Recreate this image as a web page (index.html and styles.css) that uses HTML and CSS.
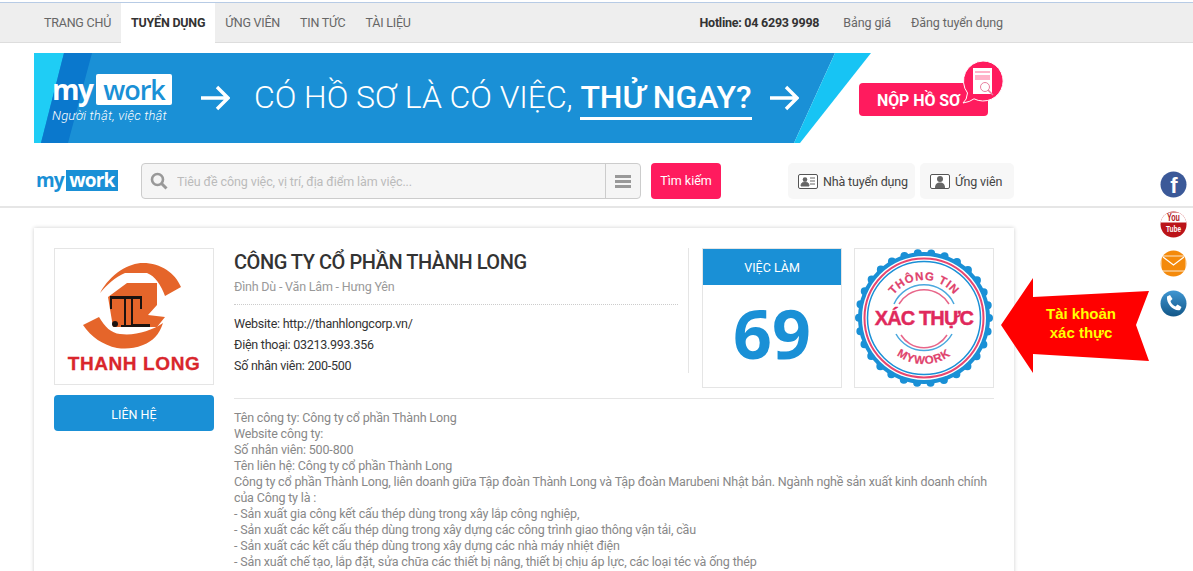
FILE: index.html
```html
<!doctype html>
<html>
<head>
	<meta charset="utf-8">
	<title>Công ty cổ phần Thành Long</title>
	<link rel="stylesheet" href="styles.css">
</head>
<body>
	<!-- menu tren cung -->
	<div class="topbar">
		<div class="wrap topbar-in">
			<ul class="menu">
				<li><a href="#">TRANG CHỦ</a></li>
				<li class="current"><a href="#">TUYỂN DỤNG</a></li>
				<li><a href="#">ỨNG VIÊN</a></li>
				<li><a href="#">TIN TỨC</a></li>
				<li><a href="#">TÀI LIỆU</a></li>
			</ul>
			<div class="top-links">
				<b>Hotline: 04 6293 9998</b>
				<a href="#">Bảng giá</a>
				<a href="#">Đăng tuyển dụng</a>
			</div>
		</div>
	</div>

	<!-- banner -->
	<div class="wrap promo">
		<div class="banner">
			<svg class="banner-bg" width="837" height="90" viewBox="0 0 837 90">
				<polygon points="0,0 801,0 760,90 0,90" fill="#1a90d6"/>
				<polygon points="0,0 30,0 7,90 0,90" fill="#1fcdf5"/>
				<polygon points="30,0 58,0 34,90 7,90" fill="#0a78cd"/>
				<polygon points="801,0 837,0 766,90 760,90" fill="#17c4f4"/>
			</svg>
			<div class="brand">
				<div class="brand-logo"><span>my</span><em>work</em></div>
				<i>Người thật, việc thật</i>
			</div>
			<svg class="arrow" width="30" height="26" viewBox="0 0 30 26"><path d="M1 13H28M17 2L28 13L17 24" fill="none" stroke="#fff" stroke-width="3.4"/></svg>
			<div class="slogan">CÓ HỒ SƠ LÀ CÓ VIỆC, <b>THỬ NGAY?</b></div>
			<svg class="arrow" width="30" height="26" viewBox="0 0 30 26"><path d="M1 13H28M17 2L28 13L17 24" fill="none" stroke="#fff" stroke-width="3.4"/></svg>
		</div>
		<a class="cta" href="#">NỘP HỒ SƠ
			<svg class="cta-bubble" width="46" height="50" viewBox="0 0 46 50">
				<path d="M23 2a20 20 0 1 1-9 37.800q-4 3.200-11 4.200q4-3 4.500-10A20 20 0 0 1 23 2z" fill="#ff1b5e" stroke="#fff" stroke-width="1"/>
				<path d="M13 9h19v26h-19z" fill="#fff"/>
				<path d="M15 12h15v2h-15zM15 16h15v5h-15z" fill="#ffb3c9"/>
				<circle cx="25" cy="28" r="4.500" fill="#fff" stroke="#e9809f"/>
				<path d="M28 31l5 5" stroke="#e9809f" stroke-width="1.500"/>
			</svg>
		</a>
	</div>

	<!-- tim kiem -->
	<div class="searchbar">
		<div class="wrap searchbar-in">
			<div class="small-logo"><span>my</span><em>work</em></div>
			<div class="search">
				<svg width="18" height="18" viewBox="0 0 18 18"><circle cx="7.500" cy="7.500" r="5.500" fill="none" stroke="#999" stroke-width="2.600"/><path d="M11.500 11.500L16.500 16.500" stroke="#999" stroke-width="3"/></svg>
				<input type="text" placeholder="Tiêu đề công việc, vị trí, địa điểm làm việc...">
				<span class="search-menu"><i></i><i></i><i></i></span>
			</div>
			<a class="btn-search" href="#">Tìm kiếm</a>
			<div class="user-btns">
				<a class="btn-employer" href="#">
					<svg width="20" height="15" viewBox="0 0 20 15"><rect x=".5" y=".5" width="19" height="14" rx="1.500" fill="#fff" stroke="#555"/><circle cx="7" cy="5.500" r="2.300" fill="#666"/><path d="M3 12c0-3 2-4 4-4s4 1 4 4zM12 4h5M12 7h5M12 10h5" fill="#666" stroke="#666"/></svg>
					Nhà tuyển dụng
				</a>
				<a class="btn-seeker" href="#">
					<svg width="20" height="15" viewBox="0 0 20 15"><rect x=".5" y=".5" width="19" height="14" rx="1.500" fill="#fff" stroke="#555"/><circle cx="10" cy="5" r="3" fill="#666"/><path d="M5 14c0-4 2-5.500 5-5.500s5 1.500 5 5.500z" fill="#666"/></svg>
					Ứng viên
				</a>
			</div>
		</div>
	</div>

	<!-- thong tin cong ty -->
	<div class="wrap card">
		<div class="card-left">
			<div class="company-logo">
				<svg width="158" height="135" viewBox="0 0 158 135">
					<path d="M45 44C56 24 74 14 88 14C106 14 120 24 126 38L110 47C106 36 100 27 92 24H70C60 28 52 36 45 44z" fill="#e5652a"/>
					<path d="M28 76L44 68C50 78 56 84 65 85C80 87 96 82 108 74C104 86 98 92 88 96C78 100 70 100 62 99C48 96 36 88 28 76z" fill="#e5652a"/>
					<path d="M53 48L72 34H102V56L93 66L110 68L102 78H58z" fill="#e5652a"/>
					<path d="M55 47H87V60H85V50H78V75H95V78H66V76H69V50H57V60H55z" fill="#1c1310"/>
					<path d="M71 50h5v26h-5z" fill="#e5652a"/>
					<circle cx="60" cy="75" r="3" fill="#1c1310"/>
					<text class="logo-name" x="79" y="121" text-anchor="middle">THANH LONG</text>
				</svg>
			</div>
			<a class="btn-contact" href="#">LIÊN HỆ</a>
		</div>
		<div class="card-right">
			<div class="summary">
				<div class="info">
					<h1>CÔNG TY CỔ PHẦN THÀNH LONG</h1>
					<p class="address">Đình Dù - Văn Lâm - Hưng Yên</p>
					<ul>
						<li>Website: http://thanhlongcorp.vn/</li>
						<li>Điện thoại: 03213.993.356</li>
						<li>Số nhân viên: 200-500</li>
					</ul>
				</div>
				<div class="jobs">
					<div class="jobs-title">VIỆC LÀM</div>
					<div class="jobs-num">69</div>
				</div>
				<div class="verified">
					<svg width="138" height="138" viewBox="0 0 138 138">
						<defs>
							<path id="arcTop" d="M31 69a38 38 0 0 1 76 0"/>
							<path id="arcBottom" d="M23 69a46 46 0 0 0 92 0"/>
						</defs>
						<circle cx="69" cy="69" r="65" fill="#1a90d6" stroke="#1a90d6" stroke-width="8" stroke-linecap="round" stroke-dasharray="0 13.614"/>
						<circle cx="69" cy="69" r="66" fill="#1a90d6"/>
						<circle cx="69" cy="69" r="62" fill="#fff"/>
						<circle cx="69" cy="69" r="59.500" fill="none" stroke="#e8466f" stroke-width="2"/>
						<circle cx="69" cy="69" r="56.500" fill="none" stroke="#1a90d6" stroke-width="1.500"/>
						<path d="M39 55a33 33 0 0 1 60 0M41 85a32 32 0 0 0 56 0" fill="none" stroke="#4aa8de" stroke-width="1.500"/>
						<path d="M44 55a29 29 0 0 1 50 0M46 86a27 27 0 0 0 46 0" fill="none" stroke="#e8668a" stroke-width="1.500"/>
						<text class="stamp-small"><textPath href="#arcTop" startOffset="50%" text-anchor="middle">THÔNG TIN</textPath></text>
						<text class="stamp-big" x="69" y="76" text-anchor="middle">XÁC THỰC</text>
						<text class="stamp-small"><textPath href="#arcBottom" startOffset="50%" text-anchor="middle">MYWORK</textPath></text>
					</svg>
				</div>
			</div>
			<div class="desc">
				Tên công ty: Công ty cổ phần Thành Long<br>
				Website công ty:<br>
				Số nhân viên: 500-800<br>
				Tên liên hệ: Công ty cổ phần Thành Long<br>
				Công ty cổ phần Thành Long, liên doanh giữa Tập đoàn Thành Long và Tập đoàn Marubeni Nhật bản. Ngành nghề sản xuất kinh doanh chính của Công ty là :<br>
				- Sản xuất gia công kết cấu thép dùng trong xây lắp công nghiệp,<br>
				- Sản xuất các kết cấu thép dùng trong xây dựng các công trình giao thông vận tải, cầu<br>
				- Sản xuất các kết cấu thép dùng trong xây dựng các nhà máy nhiệt điện<br>
				- Sản xuất chế tạo, lắp đặt, sửa chữa các thiết bị nâng, thiết bị chịu áp lực, các loại téc và ống thép<br>
				- Sản xuất các sản phẩm cơ khí phục vụ công nghiệp và xây dựng
			</div>
		</div>
	</div>

	<!-- mui ten do, nam de len trang -->
	<div class="callout">
		<svg width="150" height="96" viewBox="0 0 150 96"><polygon points="0,47 32,0 32,19 148,13 135,47 148,83 32,76 32,95" fill="#f00"/></svg>
		<span>Tài khoản<br>xác thực</span>
	</div>

	<!-- mang xa hoi -->
	<div class="social">
		<svg width="27" height="27" viewBox="0 0 27 27"><circle cx="13.500" cy="13.500" r="13" fill="#3b5998"/><text class="fb" x="14" y="22" text-anchor="middle">f</text></svg>
		<svg width="27" height="27" viewBox="0 0 27 27">
			<defs><clipPath id="ytClip"><circle cx="13.500" cy="13.500" r="13"/></clipPath></defs>
			<circle cx="13.500" cy="13.500" r="13" fill="#bb1419"/>
			<rect x="0" y="1.500" width="27" height="10" fill="#fff" clip-path="url(#ytClip)"/>
			<text class="yt-you" x="13.500" y="10" text-anchor="middle" textLength="13" lengthAdjust="spacingAndGlyphs">You</text>
			<text class="yt-tube" x="13.500" y="20.500" text-anchor="middle" textLength="15" lengthAdjust="spacingAndGlyphs">Tube</text>
		</svg>
		<svg width="27" height="27" viewBox="0 0 27 27"><circle cx="13.500" cy="13.500" r="13" fill="#f48a0b"/><path d="M0 6H27M0 21H27M1 6V21M26 6V21" stroke="#fff" stroke-width=".8" fill="none"/><path d="M3 7L13.500 15L24 7" fill="none" stroke="#fff" stroke-width="1.200"/></svg>
		<svg width="27" height="27" viewBox="0 0 27 27">
			<defs><linearGradient id="phoneBg" x1="0" y1="0" x2="0" y2="1"><stop offset="0" stop-color="#3f96d2"/><stop offset="1" stop-color="#125788"/></linearGradient></defs>
			<circle cx="13.500" cy="13.500" r="13" fill="url(#phoneBg)"/>
			<path d="M7 6.500l3-1.500 2.500 4-2 2c.5 2.500 2.500 4.500 5 5.500l2-2 4 2.500-1.500 3c-6 1.500-14-6-13-13.500z" fill="#fff"/>
		</svg>
	</div>
</body>
</html>
```

FILE: styles.css
```css
*{box-sizing:border-box;}
html,body{height:571px;overflow:hidden;}
body{
	margin:0;
	padding-top:2px;
	position:relative;
	background:#fff;
	font-family:Roboto,"Liberation Sans",sans-serif;
	font-size:12.500px;
	color:#333;
}
a{color:inherit;text-decoration:none;}
ul{margin:0;padding:0;list-style:none;}
.wrap{width:980px;margin-left:34px;}

/* menu tren cung */
.topbar{
	height:41px;
	background:#eee;
	border-top:1px solid #b7cbe5;
	border-bottom:1px solid #ddd;
}
.topbar-in{display:flex;justify-content:space-between;height:100%;}
.menu{display:flex;letter-spacing:-.22px;}
.menu li{line-height:39px;padding:0 10px;color:#666;}
.menu li.current{background:#fff;color:#333;font-weight:700;height:40px;}
.top-links{display:flex;align-items:center;gap:20px;padding-right:11px;color:#666;letter-spacing:-.1px;}
.top-links b{color:#333;margin-right:4px;letter-spacing:-.25px;}

/* banner */
.promo{display:flex;height:90px;margin-top:10px;}
.banner{
	width:837px;
	height:90px;
	flex:none;
	position:relative;
	display:flex;
	align-items:center;
	padding-left:18px;
	color:#fff;
}
.banner-bg{position:absolute;left:0;top:0;}
.brand,.arrow,.slogan{position:relative;}
.brand{width:120px;margin-right:28px;flex:none;}
.brand i{display:block;font-size:13px;font-weight:300;margin-top:3px;white-space:nowrap;letter-spacing:.2px;}
.brand-logo{display:flex;align-items:center;font-family:"Open Sans",sans-serif;font-weight:600;font-size:27px;line-height:31px;letter-spacing:-1px;justify-content:space-between;}
.brand-logo span{font-weight:700;font-size:28px;letter-spacing:-1.500px;}
.brand-logo em{font-style:normal;background:#fff;color:#1a90d6;width:76px;text-align:center;border-radius:2px;}
.slogan{font-size:32px;font-weight:300;margin:0 17px 0 24px;white-space:nowrap;letter-spacing:-.07px;}
.slogan b{font-weight:500;display:inline-block;border-bottom:3px solid #fff;line-height:40px;}
.cta{
	width:129px;
	height:33px;
	margin:30px 0 0 -12px;
	flex:none;
	position:relative;
	background:#ff1b5e;
	border-radius:4px;
	color:#fff;
	font-size:16px;
	font-weight:700;
	line-height:35px;
	padding-left:18px;
	letter-spacing:-.1px;
	white-space:nowrap;
}
.cta-bubble{position:absolute;left:101px;top:-24px;}

/* tim kiem */
.searchbar{height:45px;margin-top:20px;border-bottom:2px solid #e6e6e6;}
.searchbar-in{display:flex;align-items:flex-start;}
.small-logo{display:flex;align-items:center;width:107px;flex:none;padding:7px 0 0 2px;font-family:"Open Sans",sans-serif;font-weight:700;font-size:19px;line-height:21px;letter-spacing:-.8px;color:#1a90d6;}
.small-logo em{font-style:normal;background:#1a90d6;color:#fff;width:52px;margin-left:2px;text-align:center;}
.search{
	width:500px;
	height:36px;
	flex:none;
	display:flex;
	align-items:center;
	background:#f5f5f5;
	border:1px solid #ccc;
	border-radius:4px;
	padding-left:8px;
}
.search input{
	flex:1;
	min-width:0;
	height:100%;
	border:0;
	background:none;
	padding:0 0 0 9px;
	font:12.500px Roboto,"Liberation Sans",sans-serif;
	letter-spacing:-.1px;
}
.search input::placeholder{color:#bbb;opacity:1;}
.search-menu{width:35px;height:100%;border-left:1px solid #ccc;display:flex;flex-direction:column;justify-content:center;align-items:center;gap:2px;}
.search-menu i{display:block;width:16px;height:3px;background:#999;}
.btn-search{
	width:70px;
	height:36px;
	flex:none;
	margin-left:10px;
	background:#ff1b5e;
	border-radius:4px;
	color:#fff;
	line-height:36px;
	text-align:center;
}
.user-btns{display:flex;gap:5px;margin-left:auto;}
.user-btns a{
	height:36px;
	display:flex;
	align-items:center;
	gap:5px;
	padding:0 0 0 10px;
	background:#f7f7f7;
	border-radius:5px;
	color:#444;
	letter-spacing:-.15px;
	white-space:nowrap;
}
.btn-employer{width:127px;}
.btn-seeker{width:94px;}

/* thong tin cong ty */
.card{
	display:flex;
	gap:20px;
	height:400px;
	margin-top:20px;
	padding:20px;
	background:#fff;
	box-shadow:0 0 4px rgba(0,0,0,.2);
}
.card-left{width:160px;flex:none;}
.company-logo{height:137px;border:1px solid #e5e5e5;}
.logo-name{font-family:"Liberation Sans",sans-serif;font-weight:700;font-size:19px;letter-spacing:.6px;fill:#d9262c;stroke:#d9262c;stroke-width:.3px;}
.btn-contact{
	display:block;
	height:36px;
	margin-top:10px;
	background:#1a90d6;
	border-radius:4px;
	color:#fff;
	line-height:39px;
	text-align:center;
}
.card-right{flex:1;min-width:0;}
.summary{display:flex;align-items:flex-start;padding-bottom:10px;border-bottom:1px solid #e5e5e5;}
.info{width:455px;height:125px;flex:none;border-right:1px solid #e5e5e5;padding-right:10px;}
.info h1{margin:1px 0 0;font-size:20px;font-weight:500;line-height:26px;color:#333;letter-spacing:-.46px;}
.address{margin:4px 0 0;padding-bottom:9px;border-bottom:1px dotted #ccc;line-height:16px;color:#999;letter-spacing:-.2px;}
.info ul{margin-top:8px;letter-spacing:-.25px;}
.info li{line-height:21px;color:#333;}
.jobs{width:140px;height:140px;flex:none;margin-left:13px;border:1px solid #e5e5e5;}
.jobs-title{height:36px;background:#1a90d6;color:#fff;line-height:37px;text-align:center;}
.jobs-num{font-family:"Open Sans",sans-serif;font-weight:700;font-size:68px;line-height:96px;color:#1a90d6;text-align:center;}
.verified{width:140px;height:140px;flex:none;margin-left:12px;border:1px solid #e5e5e5;}
.stamp-small{font-family:"Liberation Sans",sans-serif;font-weight:700;font-size:11.500px;letter-spacing:.8px;fill:#e0436d;stroke:#e0436d;stroke-width:.2px;}
.stamp-big{font-family:"Liberation Sans",sans-serif;font-weight:700;font-size:20px;letter-spacing:-.9px;fill:#e0295c;stroke:#e0295c;stroke-width:.4px;}
.desc{margin-top:11px;line-height:16px;color:#888;letter-spacing:-.16px;}

/* mui ten do */
.callout{position:absolute;left:1001px;top:278px;width:150px;height:96px;}
.callout svg{display:block;}
.callout span{
	position:absolute;
	left:25px;
	top:26px;
	width:110px;
	font-family:"Liberation Sans",sans-serif;
	font-weight:700;
	font-size:15px;
	line-height:19px;
	color:#ff0;
	text-align:center;
}

/* mang xa hoi */
.social{position:absolute;left:1160px;top:171px;display:flex;flex-direction:column;gap:12.500px;}
.social svg{display:block;}
.fb{font-family:"Liberation Sans",sans-serif;font-weight:700;font-size:22px;fill:#fff;}
.yt-you{font-family:"Liberation Sans",sans-serif;font-weight:700;font-size:10px;fill:#b3161b;}
.yt-tube{font-family:"Liberation Sans",sans-serif;font-weight:700;font-size:9.500px;fill:#fff;}
```
